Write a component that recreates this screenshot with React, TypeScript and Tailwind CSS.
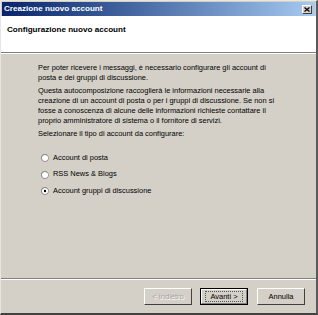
import React from "react";

function Radio({ checked }: { checked?: boolean }) {
  return (
    <svg width="8" height="8" viewBox="0 0 12 12" className="shrink-0">
      <circle cx="6" cy="6" r="5.5" fill="#808080" />
      <circle cx="6" cy="6" r="4.6" fill="#ffffff" />
      <path d="M1.5 8.5 A5 5 0 0 1 8.5 1.5" stroke="#808080" strokeWidth="1" fill="none" />
      {checked && <circle cx="6" cy="6" r="1.8" fill="#000" />}
    </svg>
  );
}

function Btn({ children, disabled, def }: { children: React.ReactNode; disabled?: boolean; def?: boolean }) {
  return (
    <div
      className={`w-[48px] h-[17px] flex items-center justify-center bg-[#d4d0c8] border ${
        def ? "border-[#000]" : "border-t-[#fff] border-l-[#fff] border-r-[#404040] border-b-[#404040]"
      } text-[7.5px] ${disabled ? "text-[#a0a0a0] [text-shadow:1px_1px_0_#fff]" : "text-black"}`}
    >
      {def ? (
        <div className="w-full h-full flex items-center justify-center border border-t-[#fff] border-l-[#fff] border-r-[#808080] border-b-[#808080]">
          <div className="px-[4px] border border-dotted border-[#555] leading-[9px]">{children}</div>
        </div>
      ) : (
        children
      )}
    </div>
  );
}

export default function App() {
  return (
    <div
      className="w-[318px] h-[315px] bg-[#d4d0c8] flex flex-col border-t border-l border-t-[#e8e6e0] border-l-[#e8e6e0] border-r-2 border-b-2 border-r-[#5a5a5a] border-b-[#404040] overflow-hidden"
      style={{ fontFamily: '"Liberation Sans", Arial, sans-serif' }}
    >
      <div className="h-[14px] mx-[1px] mt-[1px] flex items-center justify-between bg-gradient-to-r from-[#0a246a] to-[#a6caf0] pl-[2px] pr-[3px]">
        <span className="text-white font-bold text-[8.1px] leading-none">Creazione nuovo account</span>
        <div className="w-[10px] h-[9px] bg-[#d4d0c8] border border-t-[#fff] border-l-[#fff] border-r-[#404040] border-b-[#404040] flex items-center justify-center">
          <svg width="6" height="5" viewBox="0 0 6 5">
            <path d="M0.5 0.5 L5.5 4.5 M5.5 0.5 L0.5 4.5" stroke="#000" strokeWidth="1.2" />
          </svg>
        </div>
      </div>
      <div className="h-[36px] bg-white pl-[6px] pt-[9px]">
        <div className="font-bold text-[8.1px] leading-[10px] text-black">Configurazione nuovo account</div>
      </div>
      <div className="h-[1px] bg-[#808080]" />
      <div className="h-[1px] bg-white" />
      <div className="flex-1 flex flex-col pl-[37px] pt-[9px] text-[7.45px] leading-[10.3px] text-black whitespace-nowrap">
        <p>
          Per poter ricevere i messaggi, è necessario configurare gli account di
          <br />
          posta e dei gruppi di discussione.
        </p>
        <p className="mt-[2px]">
          Questa autocomposizione raccoglierà le informazioni necessarie alla
          <br />
          creazione di un account di posta o per i gruppi di discussione. Se non si
          <br />
          fosse a conoscenza di alcune delle informazioni richieste contattare il
          <br />
          proprio amministratore di sistema o il fornitore di servizi.
        </p>
        <p className="mt-[2px]">Selezionare il tipo di account da configurare:</p>
        <div className="flex flex-col gap-[6px] mt-[14px] pl-[3px]">
          <div className="flex items-center gap-[4px]"><Radio /><span>Account di posta</span></div>
          <div className="flex items-center gap-[4px]"><Radio /><span>RSS News &amp; Blogs</span></div>
          <div className="flex items-center gap-[4px]"><Radio checked /><span>Account gruppi di discussione</span></div>
        </div>
      </div>
      <div className="h-[1px] bg-[#808080]" />
      <div className="h-[1px] bg-white" />
      <div className="h-[33px] flex items-start justify-end pt-[8px] pr-[11px]">
        <Btn disabled>&lt; Indietro</Btn>
        <div className="w-[8px]" />
        <Btn def>Avanti &gt;</Btn>
        <div className="w-[9px]" />
        <Btn>Annulla</Btn>
      </div>
    </div>
  );
}
